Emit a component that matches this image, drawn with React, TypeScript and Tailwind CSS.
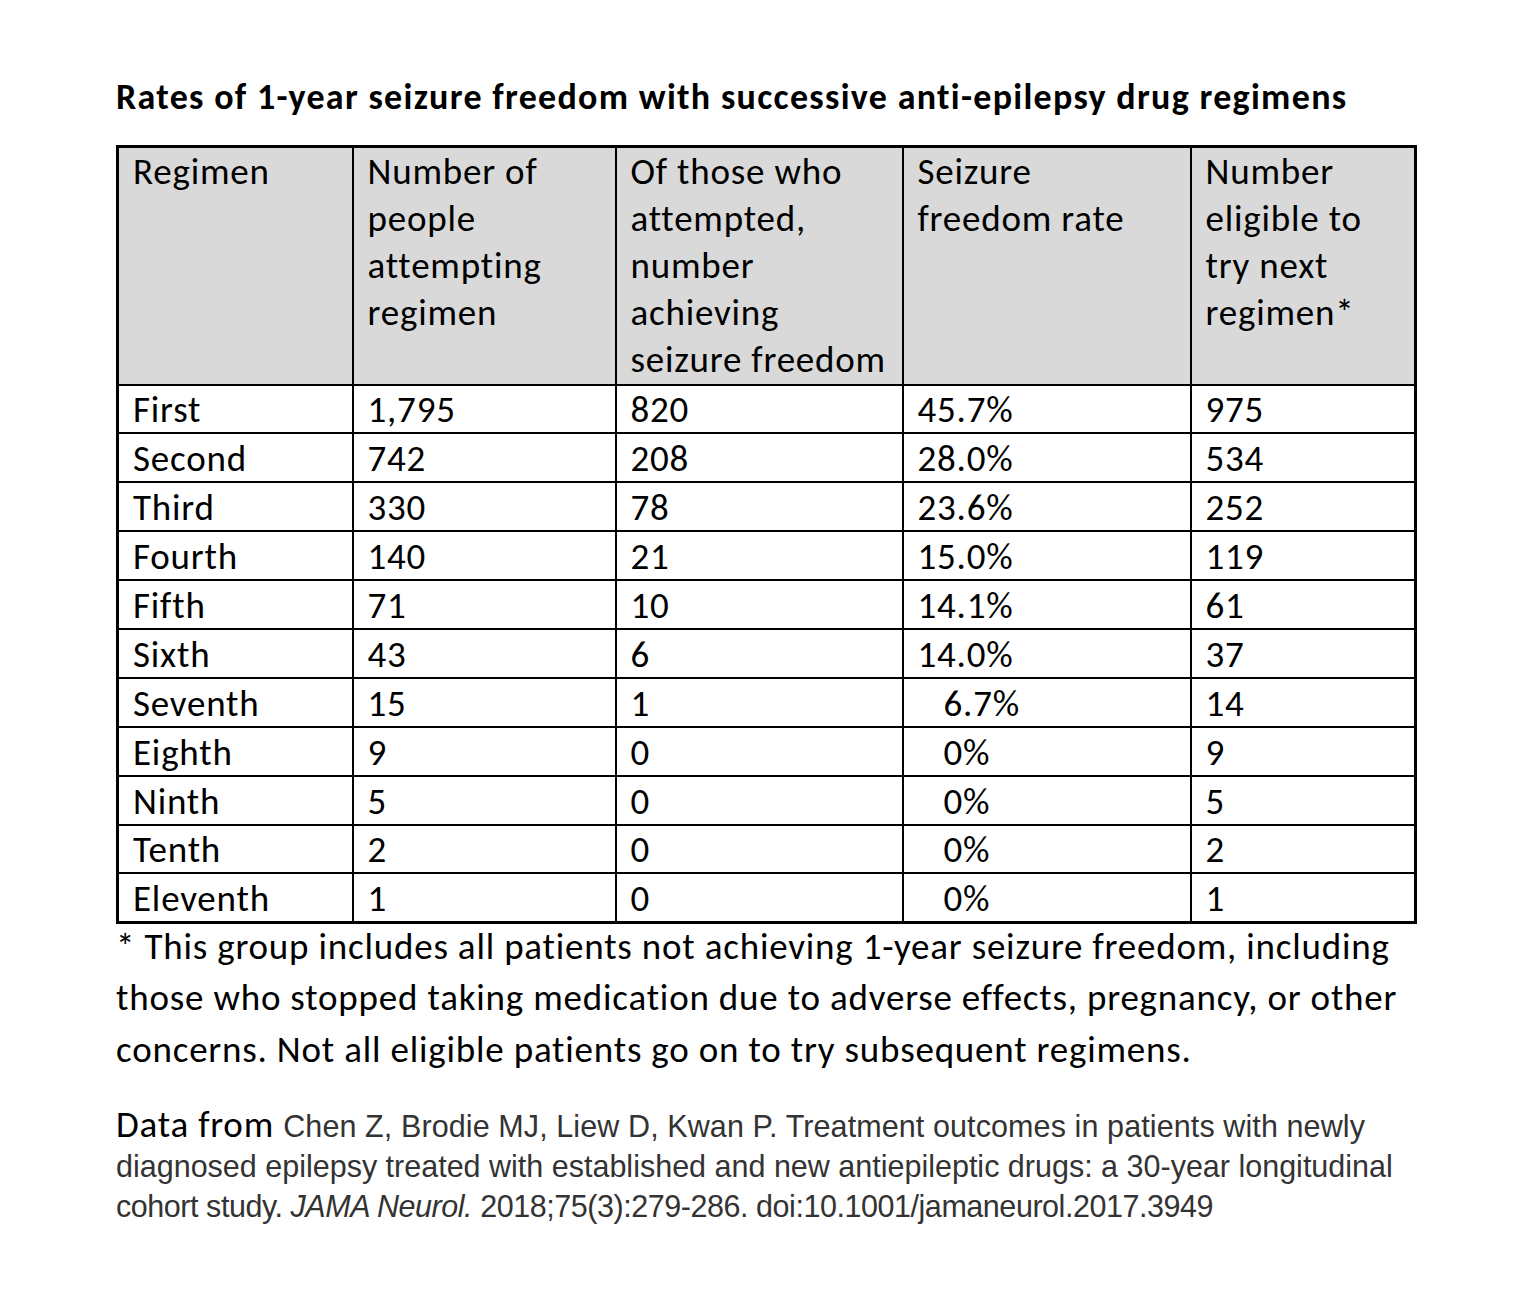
import React from "react";

const rows: [string, string, string, string, string, boolean][] = [
  ["First", "1,795", "820", "45.7%", "975", false],
  ["Second", "742", "208", "28.0%", "534", false],
  ["Third", "330", "78", "23.6%", "252", false],
  ["Fourth", "140", "21", "15.0%", "119", false],
  ["Fifth", "71", "10", "14.1%", "61", false],
  ["Sixth", "43", "6", "14.0%", "37", false],
  ["Seventh", "15", "1", "6.7%", "14", true],
  ["Eighth", "9", "0", "0%", "9", true],
  ["Ninth", "5", "0", "0%", "5", true],
  ["Tenth", "2", "0", "0%", "2", true],
  ["Eleventh", "1", "0", "0%", "1", true],
];

const cal = { fontFamily: "Carlito, Calibri, Lato, 'Noto Sans', sans-serif" };
const arial = { fontFamily: "'Liberation Sans', Arial, sans-serif" };

export default function App() {
  return (
    <div className="w-[1540px] h-[1304px] bg-white text-black pl-[116px] pt-[74px]" style={cal}>
      <h1 className="font-bold text-[36px] tracking-[1.3px] leading-[46px] whitespace-nowrap">
        Rates of 1-year seizure freedom with successive anti-epilepsy drug regimens
      </h1>
      <table className="mt-[25px] w-[1298px] table-fixed border-collapse border-[3px] border-black text-[37px] tracking-[0.8px]">
        <colgroup>
          <col className="w-[235px]" />
          <col className="w-[263px]" />
          <col className="w-[287px]" />
          <col className="w-[288px]" />
          <col className="w-[225px]" />
        </colgroup>
        <thead>
          <tr className="bg-[#d9d9d9] h-[238px]">
            {[
              ["Regimen"],
              ["Number of", "people", "attempting", "regimen"],
              ["Of those who", "attempted,", "number", "achieving", "seizure freedom"],
              ["Seizure", "freedom rate"],
              ["Number", "eligible to", "try next", "regimen*"],
            ].map((lines, i) => (
              <th
                key={i}
                className="border-2 border-black align-top text-left font-normal pl-[14px] pt-[0px] leading-[47px] whitespace-nowrap"
              >
                {lines.map((l, j) => (
                  <div key={j}>{l}</div>
                ))}
              </th>
            ))}
          </tr>
        </thead>
        <tbody>
          {rows.map((r) => (
            <tr key={r[0]} className="h-[48.9px]">
              {r.slice(0, 5).map((c, i) => (
                <td
                  key={i}
                  className="border-2 border-black pl-[14px] pt-[3px] pb-0 leading-[40px] whitespace-nowrap align-middle"
                >
                  {i === 3 && r[5] ? <span className="pl-[26px]">{c as string}</span> : (c as string)}
                </td>
              ))}
            </tr>
          ))}
        </tbody>
      </table>
      <p className="-mt-[3px] text-[37px] tracking-[0.8px] leading-[51.5px] whitespace-nowrap">
        * This group includes all patients not achieving 1-year seizure freedom, including
        <br />
        those who stopped taking medication due to adverse effects, pregnancy, or other
        <br />
        concerns. Not all eligible patients go on to try subsequent regimens.
      </p>
      <div className="mt-[28px] whitespace-nowrap">
        <div className="h-[43px] leading-[43px] flex items-baseline">
          <span className="text-[37px] tracking-[0.8px] leading-[43px]">Data from&nbsp;</span>
          <span className="text-[30.5px] tracking-[0.1px] text-[#333333] leading-[43px]" style={arial}>
            Chen Z, Brodie MJ, Liew D, Kwan P. Treatment outcomes in patients with newly
          </span>
        </div>
        <div className="text-[30.5px] leading-[40px] text-[#333333]" style={arial}>
          <div>diagnosed epilepsy treated with established and new antiepileptic drugs: a 30-year longitudinal</div>
          <div className="tracking-[-0.45px]">
            cohort study. <i>JAMA Neurol.</i> 2018;75(3):279-286. doi:10.1001/jamaneurol.2017.3949
          </div>
        </div>
      </div>
    </div>
  );
}
